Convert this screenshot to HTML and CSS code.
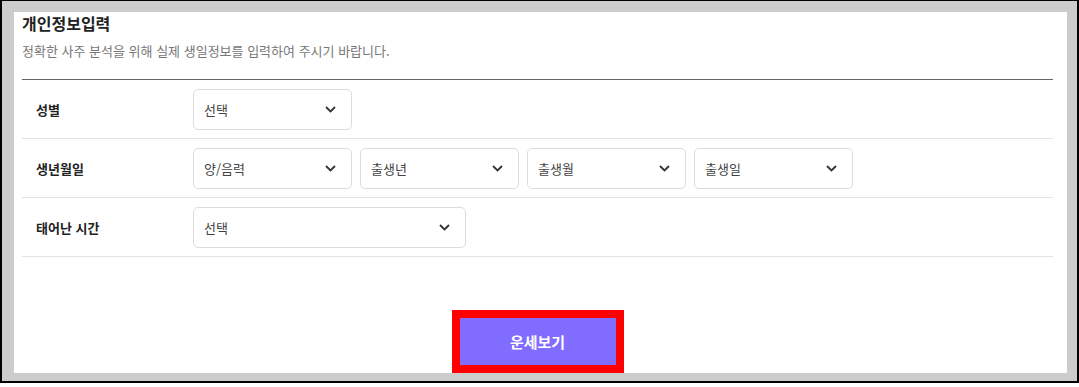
FILE: index.html
```html
<!DOCTYPE html>
<html lang="ko">
<head>
    <meta charset="UTF-8">
    <meta name="viewport" content="width=device-width, initial-scale=1.0">
    <title>개인정보입력</title>
    <link rel="stylesheet" href="styles.css">
</head>
<body>

<div class="frame">
    <div class="panel">
        <div class="head">
            <h2>개인정보입력</h2>
            <p>정확한 사주 분석을 위해 실제 생일정보를 입력하여 주시기 바랍니다.</p>
        </div>

        <div class="row">
            <div class="label">성별</div>
            <div class="fields">
                <div class="select">
                    <span>선택</span>
                    <svg width="11" height="7" viewBox="0 0 11 7"><path d="M1 1l4.5 4.5L10 1" fill="none" stroke="#333" stroke-width="1.8"/></svg>
                </div>
            </div>
        </div>

        <div class="row">
            <div class="label">생년월일</div>
            <div class="fields">
                <div class="select">
                    <span>양/음력</span>
                    <svg width="11" height="7" viewBox="0 0 11 7"><path d="M1 1l4.5 4.5L10 1" fill="none" stroke="#333" stroke-width="1.8"/></svg>
                </div>
                <div class="select">
                    <span>출생년</span>
                    <svg width="11" height="7" viewBox="0 0 11 7"><path d="M1 1l4.5 4.5L10 1" fill="none" stroke="#333" stroke-width="1.8"/></svg>
                </div>
                <div class="select">
                    <span>출생월</span>
                    <svg width="11" height="7" viewBox="0 0 11 7"><path d="M1 1l4.5 4.5L10 1" fill="none" stroke="#333" stroke-width="1.8"/></svg>
                </div>
                <div class="select">
                    <span>출생일</span>
                    <svg width="11" height="7" viewBox="0 0 11 7"><path d="M1 1l4.5 4.5L10 1" fill="none" stroke="#333" stroke-width="1.8"/></svg>
                </div>
            </div>
        </div>

        <div class="row">
            <div class="label">태어난 시간</div>
            <div class="fields">
                <div class="select wide">
                    <span>선택</span>
                    <svg width="11" height="7" viewBox="0 0 11 7"><path d="M1 1l4.5 4.5L10 1" fill="none" stroke="#333" stroke-width="1.8"/></svg>
                </div>
            </div>
        </div>

        <div class="actions">
            <button class="submit">운세보기</button>
        </div>
    </div>
</div>

</body>
</html>
```

FILE: styles.css
```css
body {
    margin: 0;
    font-family: "Noto Sans CJK KR", "Noto Sans", sans-serif;
    color: #333;
    background: #fff;
}

.frame {
    border: 2px solid #000;
    border-top-width: 1px;
    background: #ccc;
    padding: 11px 10px 10px 12px;
}

.panel {
    background: #fff;
    padding: 0 14px 0 8px;
}

.head {
    padding-bottom: 19px;
    border-bottom: 1px solid #666;
}

.head h2 {
    margin: 0;
    font-size: 16px;
    line-height: 22px;
    font-weight: 700;
    color: #222;
}

.head p {
    margin: 8px 0 0;
    font-size: 13px;
    line-height: 18px;
    color: #777;
}

.row {
    display: flex;
    align-items: center;
    height: 58px;
    padding-left: 14px;
    border-bottom: 1px solid #e3e3e3;
}

.label {
    width: 157px;
    font-size: 13px;
    font-weight: 700;
    color: #222;
}

.fields {
    display: flex;
    gap: 8px;
}

.select {
    box-sizing: border-box;
    width: 159px;
    height: 41px;
    padding: 0 15px 0 10px;
    border: 1px solid #dcdcdc;
    border-radius: 5px;
    display: flex;
    align-items: center;
    justify-content: space-between;
    font-size: 13px;
    color: #444;
}

.select.wide {
    width: 273px;
}

.actions {
    display: flex;
    justify-content: center;
    margin-top: 53px;
    margin-bottom: -2px;
}

.submit {
    width: 172px;
    height: 63px;
    border: 8px solid #ff0000;
    background: #806cff;
    color: #fff;
    font-family: inherit;
    font-size: 15px;
    font-weight: 700;
    cursor: pointer;
}
```
